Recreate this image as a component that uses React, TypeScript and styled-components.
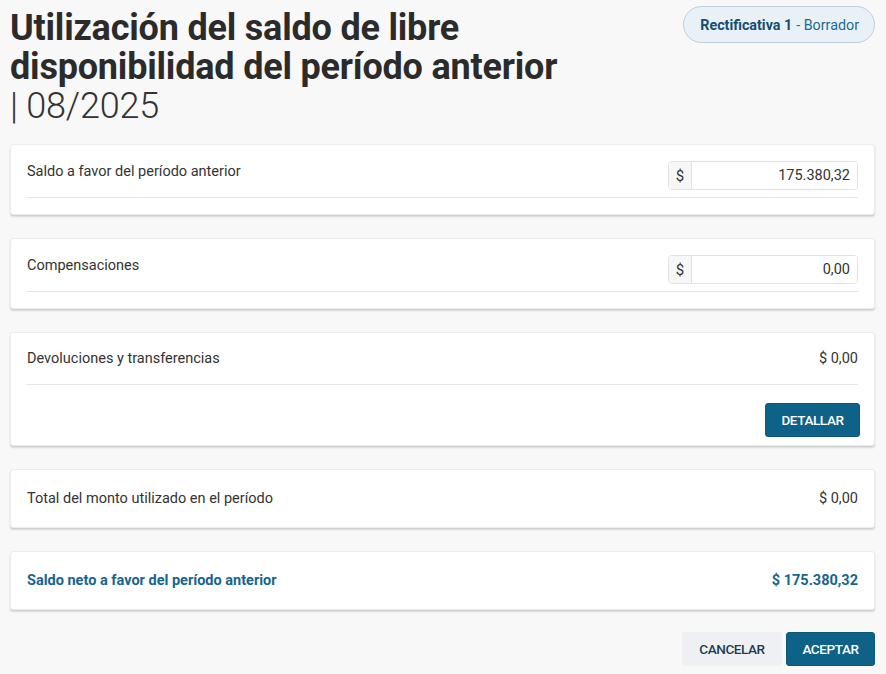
import React from "react";
import styled, { createGlobalStyle } from "styled-components";

const Global = createGlobalStyle`
  html, body { margin: 0; padding: 0; background: #f8f8f8; }
  body { font-family: Roboto, "Liberation Sans", sans-serif; color: #333; }
  * { box-sizing: border-box; }
`;

const Page = styled.div`
  padding: 9px 11px 8px 10px;
  display: flex;
  flex-direction: column;
`;

const Header = styled.div`
  display: flex;
  justify-content: space-between;
  align-items: flex-start;
  margin-bottom: 18px;
`;

const Title = styled.h1`
  margin: 0;
  font-size: 36px;
  line-height: 39px;
  font-weight: 700;
  color: #2b2b2b;
  letter-spacing: -0.2px;
  max-width: 590px;
`;

const Period = styled.span`
  display: block;
  font-weight: 300;
  color: #333;
`;

const Badge = styled.div`
  margin-top: -3px;
  height: 37px;
  padding: 0 15px 0 16px;
  border-radius: 19px;
  border: 1px solid #bcd0de;
  background: #e9f1f7;
  display: flex;
  align-items: center;
  font-size: 14.3px;
  color: #1f6a93;
  white-space: nowrap;
`;

const BadgeStrong = styled.strong`
  font-weight: 700;
  color: #164d70;
  margin-right: 4px;
`;

const Cards = styled.div`
  display: flex;
  flex-direction: column;
  gap: 23px;
`;

const Card = styled.section<{ $pb?: number }>`
  background: #fff;
  border-radius: 3px;
  box-shadow: 0 1px 1px rgba(0,0,0,0.06), 0 2px 2px rgba(0,0,0,0.12);
  border: 1px solid #ececec;
  padding: 0 16px ${(p) => p.$pb ?? 0}px;
`;

const Row = styled.div<{ $h: number; $divider?: boolean }>`
  height: ${(p) => p.$h}px;
  display: flex;
  align-items: center;
  justify-content: space-between;
  border-bottom: ${(p) => (p.$divider ? "1px solid #e6e6e6" : "none")};
`;

const Label = styled.span<{ $accent?: boolean }>`
  font-size: 14.5px;
  color: ${(p) => (p.$accent ? "#17648e" : "#333")};
  font-weight: ${(p) => (p.$accent ? 700 : 400)};
`;

const InputGroup = styled.div`
  display: flex;
  width: 190px;
  height: 29px;
  margin-top: 9px;
  border: 1px solid #e2e2e2;
  border-radius: 4px;
  overflow: hidden;
`;

const Addon = styled.span`
  width: 23px;
  display: flex;
  align-items: center;
  justify-content: center;
  background: #f7f7f7;
  border-right: 1px solid #e2e2e2;
  font-size: 15px;
  color: #333;
`;

const Input = styled.input`
  flex: 1;
  min-width: 0;
  border: none;
  outline: none;
  text-align: right;
  padding: 0 7px 0 0;
  font-family: Roboto, "Liberation Sans", sans-serif;
  font-size: 14.5px;
  color: #333;
  background: #fff;
`;

const ButtonRow = styled.div<{ $mt: number }>`
  display: flex;
  justify-content: flex-end;
  gap: 4px;
  margin-top: ${(p) => p.$mt}px;
`;

const Button = styled.button<{ $variant?: "primary" | "secondary"; $w: number }>`
  height: 34px;
  width: ${(p) => p.$w}px;
  border-radius: 3px;
  border: 1px solid ${(p) => (p.$variant === "secondary" ? "#eef0f3" : "#0d5778")};
  background: ${(p) => (p.$variant === "secondary" ? "#eef0f3" : "#0e6187")};
  color: ${(p) => (p.$variant === "secondary" ? "#1d3d52" : "#fff")};
  font-family: Roboto, "Liberation Sans", sans-serif;
  font-size: 13.5px;
  font-weight: 500;
  text-transform: uppercase;
  letter-spacing: -0.4px;
  cursor: pointer;
`;

const CardButtonRow = styled.div`
  display: flex;
  justify-content: flex-end;
  margin-right: -2px;
  padding-top: 18px;
`;

export default function App() {
  return (
    <>
      <Global />
      <Page>
        <Header>
          <Title>
            Utilización del saldo de libre disponibilidad del período anterior
            <Period>| 08/2025</Period>
          </Title>
          <Badge>
            <BadgeStrong>Rectificativa 1</BadgeStrong> - Borrador
          </Badge>
        </Header>
        <Cards>
          <Card $pb={16}>
            <Row $h={53} $divider>
              <Label>Saldo a favor del período anterior</Label>
              <InputGroup>
                <Addon>$</Addon>
                <Input defaultValue="175.380,32" />
              </InputGroup>
            </Row>
          </Card>
          <Card $pb={16}>
            <Row $h={53} $divider>
              <Label>Compensaciones</Label>
              <InputGroup>
                <Addon>$</Addon>
                <Input defaultValue="0,00" />
              </InputGroup>
            </Row>
          </Card>
          <Card $pb={8}>
            <Row $h={52} $divider>
              <Label>Devoluciones y transferencias</Label>
              <Label>$ 0,00</Label>
            </Row>
            <CardButtonRow>
              <Button $w={95}>Detallar</Button>
            </CardButtonRow>
          </Card>
          <Card>
            <Row $h={57}>
              <Label>Total del monto utilizado en el período</Label>
              <Label>$ 0,00</Label>
            </Row>
          </Card>
          <Card>
            <Row $h={57}>
              <Label $accent>Saldo neto a favor del período anterior</Label>
              <Label $accent>$ 175.380,32</Label>
            </Row>
          </Card>
        </Cards>
        <ButtonRow $mt={22}>
          <Button $variant="secondary" $w={100}>Cancelar</Button>
          <Button $w={89}>Aceptar</Button>
        </ButtonRow>
      </Page>
    </>
  );
}
